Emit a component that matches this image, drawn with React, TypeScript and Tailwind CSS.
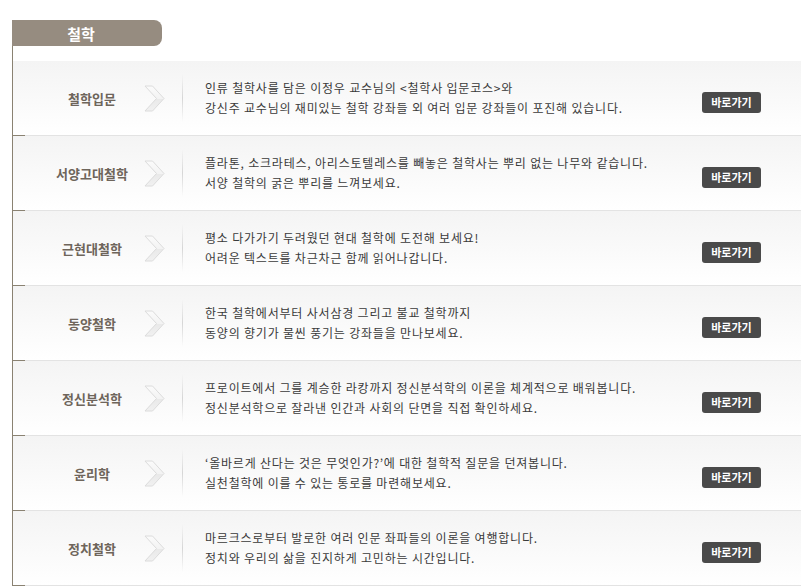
import React from "react";

const rows = [
  {
    title: "철학입문",
    l1: "인류 철학사를 담은 이정우 교수님의 <철학사 입문코스>와",
    l2: "강신주 교수님의 재미있는 철학 강좌들 외 여러 입문 강좌들이 포진해 있습니다.",
  },
  {
    title: "서양고대철학",
    l1: "플라톤, 소크라테스, 아리스토텔레스를 빼놓은 철학사는 뿌리 없는 나무와 같습니다.",
    l2: "서양 철학의 굵은 뿌리를 느껴보세요.",
  },
  {
    title: "근현대철학",
    l1: "평소 다가가기 두려웠던 현대 철학에 도전해 보세요!",
    l2: "어려운 텍스트를 차근차근 함께 읽어나갑니다.",
  },
  {
    title: "동양철학",
    l1: "한국 철학에서부터 사서삼경 그리고 불교 철학까지",
    l2: "동양의 향기가 물씬 풍기는 강좌들을 만나보세요.",
  },
  {
    title: "정신분석학",
    l1: "프로이트에서 그를 계승한 라캉까지 정신분석학의 이론을 체계적으로 배워봅니다.",
    l2: "정신분석학으로 잘라낸 인간과 사회의 단면을 직접 확인하세요.",
  },
  {
    title: "윤리학",
    l1: "‘올바르게 산다는 것은 무엇인가?’에 대한 철학적 질문을 던져봅니다.",
    l2: "실천철학에 이를 수 있는 통로를 마련해보세요.",
  },
  {
    title: "정치철학",
    l1: "마르크스로부터 발로한 여러 인문 좌파들의 이론을 여행합니다.",
    l2: "정치와 우리의 삶을 진지하게 고민하는 시간입니다.",
  },
];

function Arrow({ id }: { id: string }) {
  return (
    <svg width="21" height="27" viewBox="0 0 21 27" className="shrink-0">
      <defs>
        <linearGradient id={id} x1="0" y1="0" x2="0" y2="1">
          <stop offset="0" stopColor="#fbfbfb" />
          <stop offset="0.5" stopColor="#f3f3f3" />
          <stop offset="0.51" stopColor="#e9e9e9" />
          <stop offset="1" stopColor="#f1f1f1" />
        </linearGradient>
      </defs>
      <polygon
        points="1,1 8.5,1 20,13.5 8.5,26 1,26 12.5,13.5"
        fill={`url(#${id})`}
        stroke="#dcdcdc"
        strokeWidth="1"
        strokeLinejoin="round"
      />
    </svg>
  );
}

export default function App() {
  return (
    <div
      className="w-[801px] h-[586px] bg-white overflow-hidden"
      style={{ fontFamily: '"Noto Sans CJK KR", "Noto Sans", sans-serif' }}
    >
      <div className="pt-5 pl-3">
        <div className="w-[150px] h-[26px] bg-[#968c80] rounded-r-[8px] flex items-center justify-center pr-[12px] text-white font-bold text-[15px] leading-none">
          철학
        </div>
        <div className="border-l border-[#8a8272] pt-[15px]">
          {rows.map((r, i) => (
            <div
              key={i}
              className="relative h-[75px] border-b border-[#e3e3e3] bg-gradient-to-b from-[#f4f4f4] to-white flex items-center"
            >
              <div className="absolute left-0 bottom-[-1px] w-[12px] h-px bg-[#8a8272]" />
              <div className="w-[131px] pl-[27px] text-center text-[13px] font-bold tracking-[0px] text-[#6e655b] leading-none">
                {r.title}
              </div>
              <Arrow id={`ag${i}`} />
              <div className="ml-[17px] w-px h-[48px] bg-gradient-to-b from-transparent via-[#d6d6d6] to-transparent" />
              <div className="ml-[22px] flex-1 text-[12px] leading-[20px] text-[#3a3a3a] tracking-[0.8px]">
                <div>{r.l1}</div>
                <div>{r.l2}</div>
              </div>
              <div className="mt-2 mr-[40px] w-[59px] h-[21px] rounded-[3px] bg-[#4a4a4a] text-white text-[11px] font-bold flex items-center justify-center leading-none">
                바로가기
              </div>
            </div>
          ))}
        </div>
      </div>
    </div>
  );
}
